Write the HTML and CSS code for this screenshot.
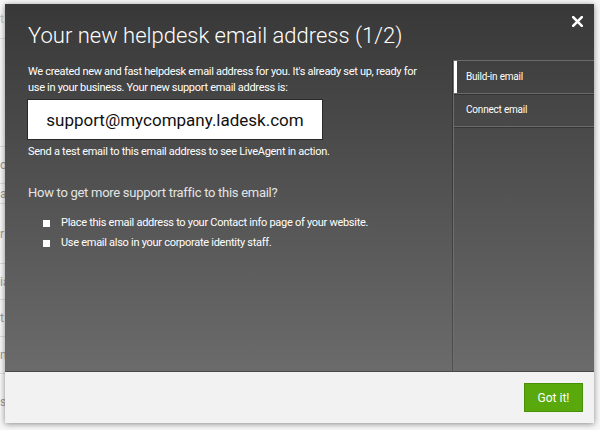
FILE: index.html
```html
<!DOCTYPE html>
<html lang="en">
<head>
<meta charset="utf-8">
<title>Helpdesk email</title>
<link rel="stylesheet" href="styles.css">
</head>
<body>
<div class="page">
  <div class="bg-col">
    <div class="bg-row r1">t</div>
    <div class="bg-row r2"></div>
    <div class="bg-row r3">c</div>
    <div class="bg-row r4">a</div>
    <div class="bg-row r5">r</div>
    <div class="bg-row r6">ia</div>
    <div class="bg-row r7">t</div>
    <div class="bg-row r8">n</div>
    <div class="bg-row r9">s</div>
  </div>
</div>

<div class="modal">
  <div class="modal-body">
    <header class="modal-head">
      <h1 class="title">Your new helpdesk email address (1/2)</h1>
      <button class="close" aria-label="Close">
        <svg width="11" height="11" viewBox="0 0 11 11"><path d="M1.2 1.2 L9.8 9.8 M9.8 1.2 L1.2 9.8" stroke="#fff" stroke-width="2.6" stroke-linecap="square"/></svg>
      </button>
    </header>
    <div class="cols">
      <div class="main">
        <p class="intro">We created new and fast helpdesk email address for you. It's already set up, ready for<br>use in your business. Your new support email address is:</p>
        <div class="email-box">support@mycompany.ladesk.com</div>
        <p class="hint">Send a test email to this email address to see LiveAgent in action.</p>
        <h2 class="sub">How to get more support traffic to this email?</h2>
        <ul class="tips">
          <li><span class="box"></span>Place this email address to your Contact info page of your website.</li>
          <li><span class="box"></span>Use email also in your corporate identity staff.</li>
        </ul>
      </div>
      <nav class="side">
        <div class="tab active">Build-in email</div>
        <div class="tab">Connect email</div>
      </nav>
    </div>
  </div>
  <footer class="modal-foot">
    <button class="btn">Got it!</button>
  </footer>
</div>
</body>
</html>
```

FILE: styles.css
```css
html, body {
  margin: 0;
  padding: 0;
}
body {
  width: 600px;
  height: 430px;
  overflow: hidden;
  background: #f7f7f7;
  font-family: Roboto, "Liberation Sans", sans-serif;
  position: relative;
}

/* page behind the modal */
.page {
  height: 430px;
}
.bg-col {
  width: 12px;
  display: flex;
  flex-direction: column;
}
.bg-row {
  white-space: nowrap;
  font-size: 12px;
  color: #9a9a9a;
  border-bottom: 1px solid #dcdcdc;
  display: flex;
  align-items: center;
  box-sizing: border-box;
  padding-left: 0;
}
.r1 { height: 39px; color: #c4c4c4; }
.r2 { height: 108px; }
.r3 { height: 37px; }
.r4 { height: 20px; }
.r5 { height: 60px; }
.r6 { height: 36px; }
.r7 { height: 37px; }
.r8 { height: 37px; }
.r9 { height: 56px; border-bottom: 0; }

/* modal */
.modal {
  position: absolute;
  left: 5px;
  top: 4px;
  width: 589px;
  height: 419px;
  display: flex;
  flex-direction: column;
  box-shadow: 0 1px 6px rgba(0, 0, 0, 0.45);
}
.modal-body {
  height: 367px;
  display: flex;
  flex-direction: column;
  background: linear-gradient(to bottom, #383838, #6b6b6b);
  color: #fff;
  position: relative;
}
.modal-head {
  height: 56px;
  box-sizing: border-box;
  padding: 18px 0 0 23px;
}
.title {
  margin: 0;
  font-size: 22px;
  line-height: 28px;
  font-weight: 300;
  color: #fff;
}
.close {
  position: absolute;
  top: 12px;
  right: 11px;
  width: 11px;
  height: 11px;
  padding: 0;
  border: 0;
  background: none;
  display: block;
}
.close svg { display: block; }

.cols {
  flex: 1;
  display: flex;
}
.main {
  flex: 1;
  padding: 4px 0 0 23px;
}
.intro {
  margin: 0;
  font-size: 11px;
  line-height: 16px;
  letter-spacing: -0.3px;
}
.email-box {
  margin-top: 3px;
  width: 296px;
  height: 41px;
  box-sizing: border-box;
  background: #fff;
  border: 1px solid #2a2a2a;
  color: #111;
  font-size: 17px;
  display: flex;
  align-items: center;
  justify-content: center;
  margin-left: -1px;
}
.hint {
  margin: 4px 0 0;
  font-size: 11px;
  line-height: 16px;
  letter-spacing: -0.28px;
}
.sub {
  margin: 25px 0 0;
  font-size: 13px;
  line-height: 16px;
  font-weight: 400;
  color: #e4e4e4;
  letter-spacing: -0.28px;
}
.tips {
  list-style: none;
  margin: 12px 0 0;
  padding: 0 0 0 15px;
}
.tips li {
  display: flex;
  align-items: center;
  gap: 11px;
  font-size: 11px;
  line-height: 20px;
  letter-spacing: -0.28px;
}
.box {
  width: 7px;
  height: 7px;
  background: #fff;
  flex: none;
}

.side {
  width: 140px;
  border-left: 1px solid #6e6e6e;
  box-shadow: -1px 0 0 rgba(0, 0, 0, 0.25);
}
.tab {
  height: 33px;
  line-height: 32px;
  box-sizing: border-box;
  padding-left: 12px;
  font-size: 10px;
  letter-spacing: -0.2px;
  color: #fff;
  border-bottom: 1px solid #6a6a6a;
  box-shadow: 0 1px 0 rgba(0, 0, 0, 0.25);
}
.tab:first-child {
  height: 34px;
  border-top: 1px solid #6a6a6a;
}
.tab.active {
  box-shadow: inset 3px 0 0 #fff, 0 1px 0 rgba(0, 0, 0, 0.25);
}

.modal-foot {
  flex: 1;
  background: #f2f2f2;
  border-top: 1px solid #4a4a4a;
  display: flex;
  justify-content: flex-end;
  align-items: flex-start;
  padding: 11px 11px 0 0;
}
.btn {
  width: 59px;
  height: 29px;
  padding: 0;
  background: #59a90c;
  border: 1px solid #4a8f0a;
  color: #fff;
  font-family: Roboto, "Liberation Sans", sans-serif;
  font-size: 12px;
}
```
